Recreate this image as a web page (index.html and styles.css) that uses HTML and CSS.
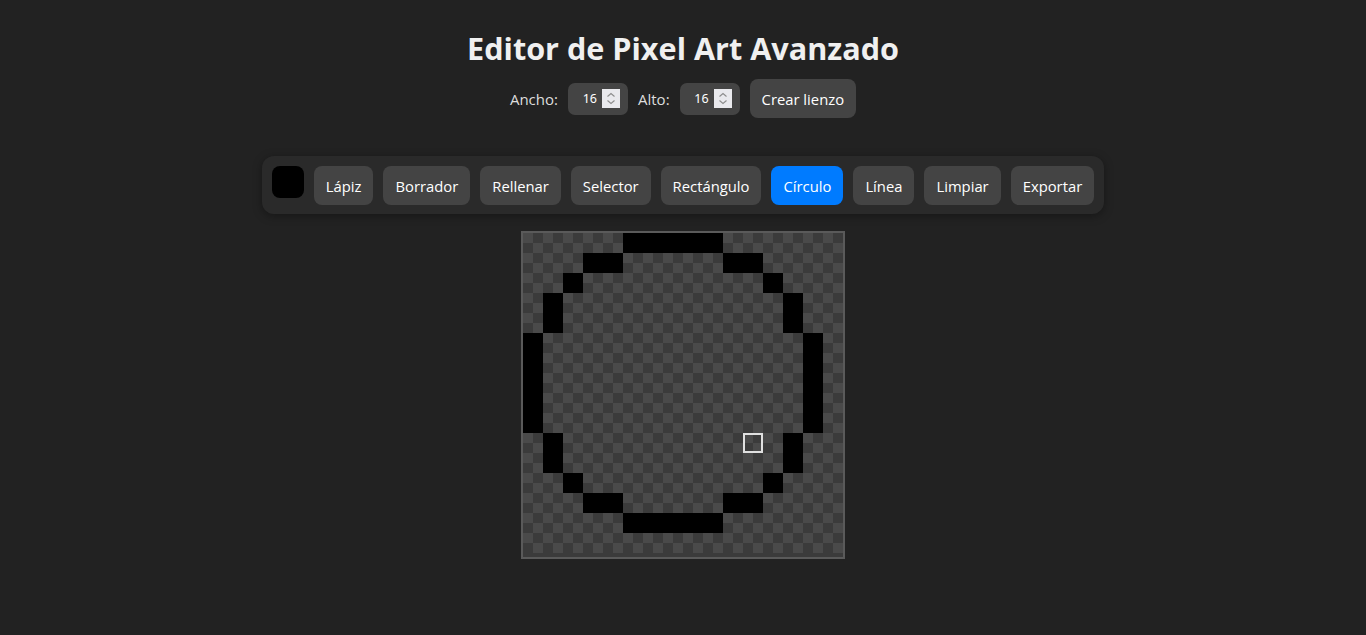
FILE: index.html
```html
<!DOCTYPE html>
<html lang="es">
<head>
    <meta charset="UTF-8">
    <meta name="viewport" content="width=device-width, initial-scale=1.0">
    <title>Editor de Pixel Art Avanzado</title>
    <link rel="stylesheet" href="styles.css">
</head>
<body>
    <div class="app">
        <h1>Editor de Pixel Art Avanzado</h1>

        <div class="size-controls">
            <label for="width">Ancho:</label>
            <div class="number-field">
                <input type="number" id="width" class="size-input" value="16" min="1" max="64">
                <span class="spinner">
                    <svg width="18" height="19" viewBox="0 0 18 19">
                        <path d="M5.5 7.5 L9 4.5 L12.5 7.5" />
                        <path d="M5.5 11.5 L9 14.5 L12.5 11.5" />
                    </svg>
                </span>
            </div>
            <label for="height">Alto:</label>
            <div class="number-field">
                <input type="number" id="height" class="size-input" value="16" min="1" max="64">
                <span class="spinner">
                    <svg width="18" height="19" viewBox="0 0 18 19">
                        <path d="M5.5 7.5 L9 4.5 L12.5 7.5" />
                        <path d="M5.5 11.5 L9 14.5 L12.5 11.5" />
                    </svg>
                </span>
            </div>
            <button class="btn">Crear lienzo</button>
        </div>

        <div class="toolbar">
            <div class="color-swatch"></div>
            <button class="btn">Lápiz</button>
            <button class="btn">Borrador</button>
            <button class="btn">Rellenar</button>
            <button class="btn">Selector</button>
            <button class="btn">Rectángulo</button>
            <button class="btn active">Círculo</button>
            <button class="btn">Línea</button>
            <button class="btn">Limpiar</button>
            <button class="btn">Exportar</button>
        </div>

        <div class="canvas-wrap">
            <canvas id="canvas" class="pixel-canvas" width="320" height="320"></canvas>
        </div>
    </div>

    <script>
        const cell = 20;
        const canvas = document.getElementById('canvas');
        const ctx = canvas.getContext('2d');

        // filas con las columnas pintadas
        const pixels = {
            0: [5, 6, 7, 8, 9],
            1: [3, 4, 10, 11],
            2: [2, 12],
            3: [1, 13],
            4: [1, 13],
            5: [0, 14],
            6: [0, 14],
            7: [0, 14],
            8: [0, 14],
            9: [0, 14],
            10: [1, 13],
            11: [1, 13],
            12: [2, 12],
            13: [3, 4, 10, 11],
            14: [5, 6, 7, 8, 9]
        };

        ctx.fillStyle = '#000';
        for (const row in pixels) {
            pixels[row].forEach(col => {
                ctx.fillRect(col * cell, row * cell, cell, cell);
            });
        }

        // cursor
        ctx.strokeStyle = '#e0e0e0';
        ctx.lineWidth = 2;
        ctx.strokeRect(11 * cell + 1, 10 * cell + 1, cell - 2, cell - 2);
    </script>
</body>
</html>
```

FILE: styles.css
```css
* {
    box-sizing: border-box;
}

body {
    margin: 0;
    background: #222;
    color: #eee;
    font-family: 'Open Sans', 'Noto Sans', sans-serif;
}

.app {
    display: flex;
    flex-direction: column;
    align-items: center;
    padding-top: 28px;
}

h1 {
    margin: 0 0 11px;
    font-size: 30.6px;
    line-height: 40px;
    font-weight: 700;
    color: #f0f0f0;
}

.size-controls {
    display: flex;
    align-items: center;
    gap: 10px;
    font-size: 15px;
    color: #ddd;
}

.number-field {
    display: flex;
    align-items: center;
    width: 60px;
    height: 32px;
    padding: 0 8px 0 6px;
    border-radius: 7px;
    background: #444;
}

.size-input {
    width: 23px;
    margin-right: 5px;
    padding: 0;
    border: none;
    background: transparent;
    color: #fff;
    font-family: 'Noto Sans', sans-serif;
    font-size: 12.5px;
    text-align: right;
    outline: none;
    -moz-appearance: textfield;
}

.size-input::-webkit-inner-spin-button,
.size-input::-webkit-outer-spin-button {
    -webkit-appearance: none;
    margin: 0;
}

.spinner {
    display: block;
    flex-shrink: 0;
    width: 18px;
    height: 19px;
    background: #e9e9ed;
}

.spinner svg {
    display: block;
    fill: none;
    stroke: #8c8c8c;
    stroke-width: 1.1;
}

.btn {
    height: 39px;
    padding: 0 12px;
    border: none;
    border-radius: 8px;
    background: #444;
    color: #fff;
    font-family: 'Open Sans', 'Noto Sans', sans-serif;
    font-size: 14.8px;
    cursor: pointer;
}

.btn:hover {
    background: #555;
}

.btn.active {
    background: #007bff;
}

.toolbar {
    display: flex;
    align-items: flex-start;
    gap: 10px;
    margin-top: 38px;
    padding: 10px 10px 9px;
    background: #2a2a2a;
    border-radius: 12px;
    box-shadow: 0 2px 10px rgba(0, 0, 0, 0.35);
}

.color-swatch {
    width: 32px;
    height: 32px;
    border-radius: 8px;
    background: #000;
}

.canvas-wrap {
    margin-top: 17px;
    padding-bottom: 4px;
    border: 2px solid #5a5a5a;
    background: #3b3b3b;
}

.pixel-canvas {
    display: block;
    background-color: #4a4a4a;
    background-image:
        linear-gradient(45deg, #3b3b3b 25%, transparent 25%, transparent 75%, #3b3b3b 75%),
        linear-gradient(45deg, #3b3b3b 25%, transparent 25%, transparent 75%, #3b3b3b 75%);
    background-size: 20px 20px;
    background-position: 0 0, 10px 10px;
}
```
